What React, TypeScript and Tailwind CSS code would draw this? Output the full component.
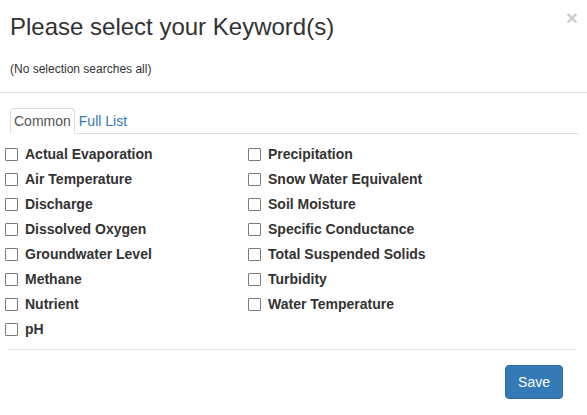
import React, { useState } from 'react';

const LEFT = [
  'Actual Evaporation',
  'Air Temperature',
  'Discharge',
  'Dissolved Oxygen',
  'Groundwater Level',
  'Methane',
  'Nutrient',
  'pH',
];

const RIGHT = [
  'Precipitation',
  'Snow Water Equivalent',
  'Soil Moisture',
  'Specific Conductance',
  'Total Suspended Solids',
  'Turbidity',
  'Water Temperature',
];

function KeywordBox({ label }: { label: string }) {
  const [checked, setChecked] = useState(false);
  return (
    <label className="flex h-[25px] cursor-pointer items-center">
      <input
        type="checkbox"
        checked={checked}
        onChange={() => setChecked(!checked)}
        className="m-0 h-[13px] w-[13px] appearance-none rounded-[1px] border border-[#7a7a7a] bg-white checked:bg-[#337ab7]"
      />
      <span className="ml-[7px] text-[14px] font-bold leading-[25px] text-[#333]">{label}</span>
    </label>
  );
}

export default function App() {
  const [tab, setTab] = useState('common');

  return (
    <div
      className="relative h-[415px] w-[587px] overflow-hidden bg-white text-[#333]"
      style={{ fontFamily: '"Liberation Sans", Arial, sans-serif' }}
    >
      {/* header */}
      <div className="h-[93px] border-b border-[#e5e5e5] px-[10px] pt-[13px]">
        <h4 className="text-[24px] font-normal leading-[28px] text-[#333]">Please select your Keyword(s)</h4>
        <p className="mt-[20px] text-[12px] leading-[17px]">(No selection searches all)</p>
        <button className="absolute right-[9px] top-[5px] text-[21px] font-bold leading-[26px] text-black opacity-20">
          ×
        </button>
      </div>

      {/* body */}
      <div className="pt-[15px]">
        <div className="ml-[10px] mr-[9px] flex h-[26px] items-end border-b border-[#ddd]">
          <button
            onClick={() => setTab('common')}
            className={
              tab === 'common'
                ? '-mb-px h-[26px] rounded-t-[4px] border border-[#ddd] border-b-white bg-white px-[3px] text-[14px] leading-[24px] text-[#555]'
                : '-mb-px h-[26px] rounded-t-[4px] border border-transparent px-[3px] text-[14px] leading-[24px] text-[#337ab7]'
            }
          >
            Common
          </button>
          <button
            onClick={() => setTab('full')}
            className={
              tab === 'full'
                ? '-mb-px h-[26px] rounded-t-[4px] border border-[#ddd] border-b-white bg-white px-[3px] text-[14px] leading-[24px] text-[#555]'
                : '-mb-px h-[26px] rounded-t-[4px] border border-transparent px-[3px] text-[14px] leading-[24px] text-[#337ab7]'
            }
          >
            Full List
          </button>
        </div>

        <div className="mt-[8px] grid grid-cols-[243px_1fr] pl-[5px]">
          <div className="flex flex-col">
            {LEFT.map((k) => (
              <KeywordBox key={k} label={k} />
            ))}
          </div>
          <div className="flex flex-col">
            {RIGHT.map((k) => (
              <KeywordBox key={k} label={k} />
            ))}
          </div>
        </div>

        <div className="ml-[8px] mr-[10px] mt-[7px] border-t border-[#e5e5e5]" />

        <div className="flex justify-end pr-[24px] pt-[15px]">
          <button className="h-[34px] rounded-[4px] border border-[#2e6da4] bg-[#337ab7] px-[12px] text-[14px] leading-[20px] text-white">
            Save
          </button>
        </div>
      </div>
    </div>
  );
}
